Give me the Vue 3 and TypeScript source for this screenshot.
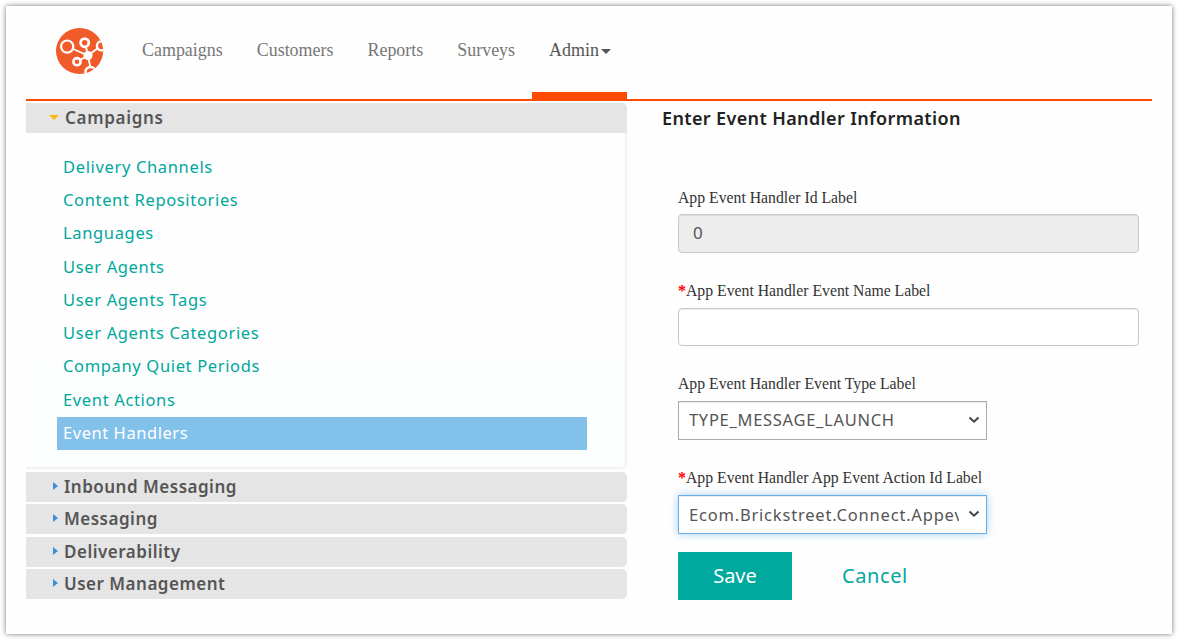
<script setup lang="ts">
import { ref } from 'vue'

const navItems: string[] = ['Campaigns', 'Customers', 'Reports', 'Surveys']
const links: string[] = [
  'Delivery Channels',
  'Content Repositories',
  'Languages',
  'User Agents',
  'User Agents Tags',
  'User Agents Categories',
  'Company Quiet Periods',
  'Event Actions',
  'Event Handlers',
]
const sections: string[] = ['Inbound Messaging', 'Messaging', 'Deliverability', 'User Management']
const activeLink = ref('Event Handlers')
const handlerId = ref('0')
const eventName = ref('')
const eventType = ref('TYPE_MESSAGE_LAUNCH')
const actionId = ref('Ecom.Brickstreet.Connect.Appevent')
</script>

<template>
  <div class="page">
    <div class="card">
      <header class="header">
        <svg class="logo" width="48" height="48" viewBox="0 0 48 48">
          <defs>
            <clipPath id="disc"><ellipse cx="23.6" cy="23" rx="23.6" ry="23" /></clipPath>
          </defs>
          <g clip-path="url(#disc)">
            <rect width="48" height="48" fill="#f15a29" />
            <g fill="none" stroke="#fff">
              <path d="M17 21 L32 27.5 M30 19 L32 27.5 M42 20 L32 27.5 M24 32 L32 27.5 M32 27.5 L34.500 40" stroke-width="1.9" />
              <circle cx="11.200" cy="18.600" r="6.100" stroke-width="2.2" />
              <circle cx="28.700" cy="14.700" r="4.100" stroke-width="2.7" />
              <circle cx="45.500" cy="17.800" r="4.600" stroke-width="2.4" />
              <circle cx="21" cy="33.700" r="3.600" stroke-width="2.6" />
              <circle cx="34.500" cy="44" r="5" stroke-width="2.6" />
            </g>
            <circle cx="32" cy="27.500" r="4.500" fill="#fff" />
          </g>
        </svg>
        <nav class="nav">
          <a v-for="item in navItems" :key="item" class="nav-item">{{ item }}</a>
          <a class="nav-item active">Admin<span class="caret" /></a>
        </nav>
      </header>

      <div class="body">
        <aside class="side">
          <div class="bar open"><i class="arrow-down" /><span>Campaigns</span></div>
          <div class="panel">
            <a
              v-for="link in links"
              :key="link"
              class="link"
              :class="{ selected: link === activeLink }"
              @click="activeLink = link"
            >{{ link }}</a>
          </div>
          <div class="sections">
            <div v-for="s in sections" :key="s" class="bar"><i class="arrow-right" /><span>{{ s }}</span></div>
          </div>
        </aside>

        <main class="main">
          <h1 class="title">Enter Event Handler Information</h1>
          <form class="form" @submit.prevent>
            <div class="field">
              <label>App Event Handler Id Label</label>
              <input v-model="handlerId" class="input" disabled />
            </div>
            <div class="field">
              <label class="raised"><b>*</b>App Event Handler Event Name Label</label>
              <input v-model="eventName" class="input" />
            </div>
            <div class="field">
              <label class="raised">App Event Handler Event Type Label</label>
              <div class="select-wrap">
                <select v-model="eventType" class="select type">
                  <option>TYPE_MESSAGE_LAUNCH</option>
                </select>
                <svg class="chevron" width="12" height="8" viewBox="0 0 12 8"><path d="M1.500 1.500 L6 5.700 L10.500 1.500" /></svg>
              </div>
            </div>
            <div class="field">
              <label class="raised"><b>*</b>App Event Handler App Event Action Id Label</label>
              <div class="select-wrap">
                <select v-model="actionId" class="select focused">
                  <option>Ecom.Brickstreet.Connect.Appevent</option>
                </select>
                <svg class="chevron" width="12" height="8" viewBox="0 0 12 8"><path d="M1.500 1.500 L6 5.700 L10.500 1.500" /></svg>
              </div>
            </div>
            <div class="actions">
              <button class="save" type="submit">Save</button>
              <a class="cancel">Cancel</a>
            </div>
          </form>
        </main>
      </div>
    </div>
  </div>
</template>

<style>
html,
body {
  margin: 0;
  overflow: hidden;
  background: #fff;
}
</style>

<style scoped>
* {
  box-sizing: border-box;
}
.page {
  width: 1178px;
  height: 640px;
  padding: 6px;
  font-family: 'Noto Sans', 'Open Sans', sans-serif;
}
.card {
  width: 1166px;
  height: 628px;
  padding: 0 20px;
  background: #fefefe;
  box-shadow: 0 0 5px rgba(0, 0, 0, 0.55);
}
.header {
  display: flex;
  height: 95px;
  padding-left: 30px;
  border-bottom: 2px solid #fa4b00;
}
.logo {
  flex: none;
  margin-top: 22px;
}
.nav {
  display: flex;
  margin-left: 21px;
  font-family: 'Liberation Serif', serif;
  font-size: 17.950px;
  line-height: 20px;
  color: #777;
}
.nav-item {
  height: 93px;
  padding: 34px 17px 0;
  white-space: nowrap;
}
.nav-item.active {
  width: 95px;
  color: #555;
  border-bottom: 7px solid #fa4b00;
}
.caret {
  display: inline-block;
  margin-left: 2px;
  vertical-align: 2px;
  border: 4.5px solid transparent;
  border-width: 5px 5px 0;
  border-top-color: #555;
}
.body {
  display: flex;
}
.side {
  width: 601px;
  padding-top: 2px;
}
.bar {
  display: flex;
  align-items: center;
  height: 30px;
  background: #e5e5e5;
  border-radius: 0 5px 5px 0;
  font-size: 17px;
  font-weight: 600;
  line-height: 30px;
  letter-spacing: 0.5px;
  color: #555;
}
.bar.open {
  border-radius: 0 5px 0 0;
  letter-spacing: 0.7px;
}
.arrow-down {
  margin: 0 6px 2px 23px;
  border: 5px solid transparent;
  border-width: 5px 5px 0;
  border-top-color: #fbb80f;
}
.arrow-right {
  margin: 0 6px 2px 27px;
  border: 4.5px solid transparent;
  border-left: 5px solid #3c8fdd;
  border-right: 0;
}
.panel {
  height: 336px;
  padding: 17.750px 38px 0 31px;
  border: solid #f2f2f2;
  border-width: 0 2px 2px 0;
  border-radius: 0 0 5px 0;
  background: linear-gradient(#fefefe 222px, #fcfefd 222px);
}
.link {
  display: block;
  height: 33.250px;
  padding-left: 6px;
  font-size: 16.500px;
  line-height: 32px;
  letter-spacing: 0.650px;
  color: #00a79d;
}
.link.selected {
  line-height: 31.500px;
  letter-spacing: 0.550px;
  color: #fff;
  background: #82c1ea;
}
.sections {
  display: flex;
  flex-direction: column;
  gap: 2.330px;
  padding-top: 3px;
}
.main {
  flex: 1;
  padding-left: 35px;
}
.title {
  margin: 0;
  height: 34px;
  font-size: 18px;
  font-weight: 600;
  line-height: 34px;
  letter-spacing: 0.370px;
  white-space: nowrap;
  color: #222;
}
.form {
  padding: 53px 0 0 16px;
}
.field {
  height: 93.700px;
}
.field label {
  display: block;
  height: 26px;
  font-family: 'Liberation Serif', serif;
  font-size: 15.750px;
  line-height: 20px;
  white-space: nowrap;
  color: #333;
}
.field label.raised {
  line-height: 18px;
}
.field b {
  font-size: 16px;
  font-weight: 700;
  color: #f00;
}
.input {
  display: block;
  width: 461px;
  height: 38.500px;
  padding: 0 14px;
  border: 1px solid #c8c8c8;
  border-radius: 4px;
  background: #fff;
  box-shadow: inset 0 1px 1px rgba(0, 0, 0, 0.075);
  font-family: inherit;
  font-size: 17px;
  color: #555;
}
.input:disabled {
  padding-bottom: 2px;
  background: #ededed;
}
.select-wrap {
  position: relative;
  width: 309px;
  height: 39px;
}
.select {
  width: 309px;
  height: 39px;
  padding: 0 27px 0 10px;
  border: 1px solid #aaa;
  border-radius: 0;
  outline: 0;
  appearance: none;
  background: #fff;
  box-shadow: inset 0 1px 1px rgba(0, 0, 0, 0.075);
  font-family: inherit;
  font-size: 16.500px;
  letter-spacing: 0.8px;
  color: #555;
}
.select.type {
  padding-bottom: 2px;
  letter-spacing: 0.7px;
}
.select.focused {
  border-color: #66afe9;
  box-shadow: inset 0 1px 1px rgba(0, 0, 0, 0.075), 0 0 8px rgba(102, 175, 233, 0.6);
}
.chevron {
  position: absolute;
  right: 7px;
  top: 15px;
  fill: none;
  stroke: #444;
  stroke-width: 2;
}
.actions {
  display: flex;
  align-items: center;
  height: 48px;
  margin-top: -11px;
}
.save {
  width: 114px;
  height: 48px;
  padding: 0;
  border: 0;
  background: #00a99d;
  font-family: inherit;
  font-size: 20px;
  color: #fff;
}
.cancel {
  margin-left: 50px;
  font-size: 20px;
  letter-spacing: 0.6px;
  color: #00a79d;
}
</style>
